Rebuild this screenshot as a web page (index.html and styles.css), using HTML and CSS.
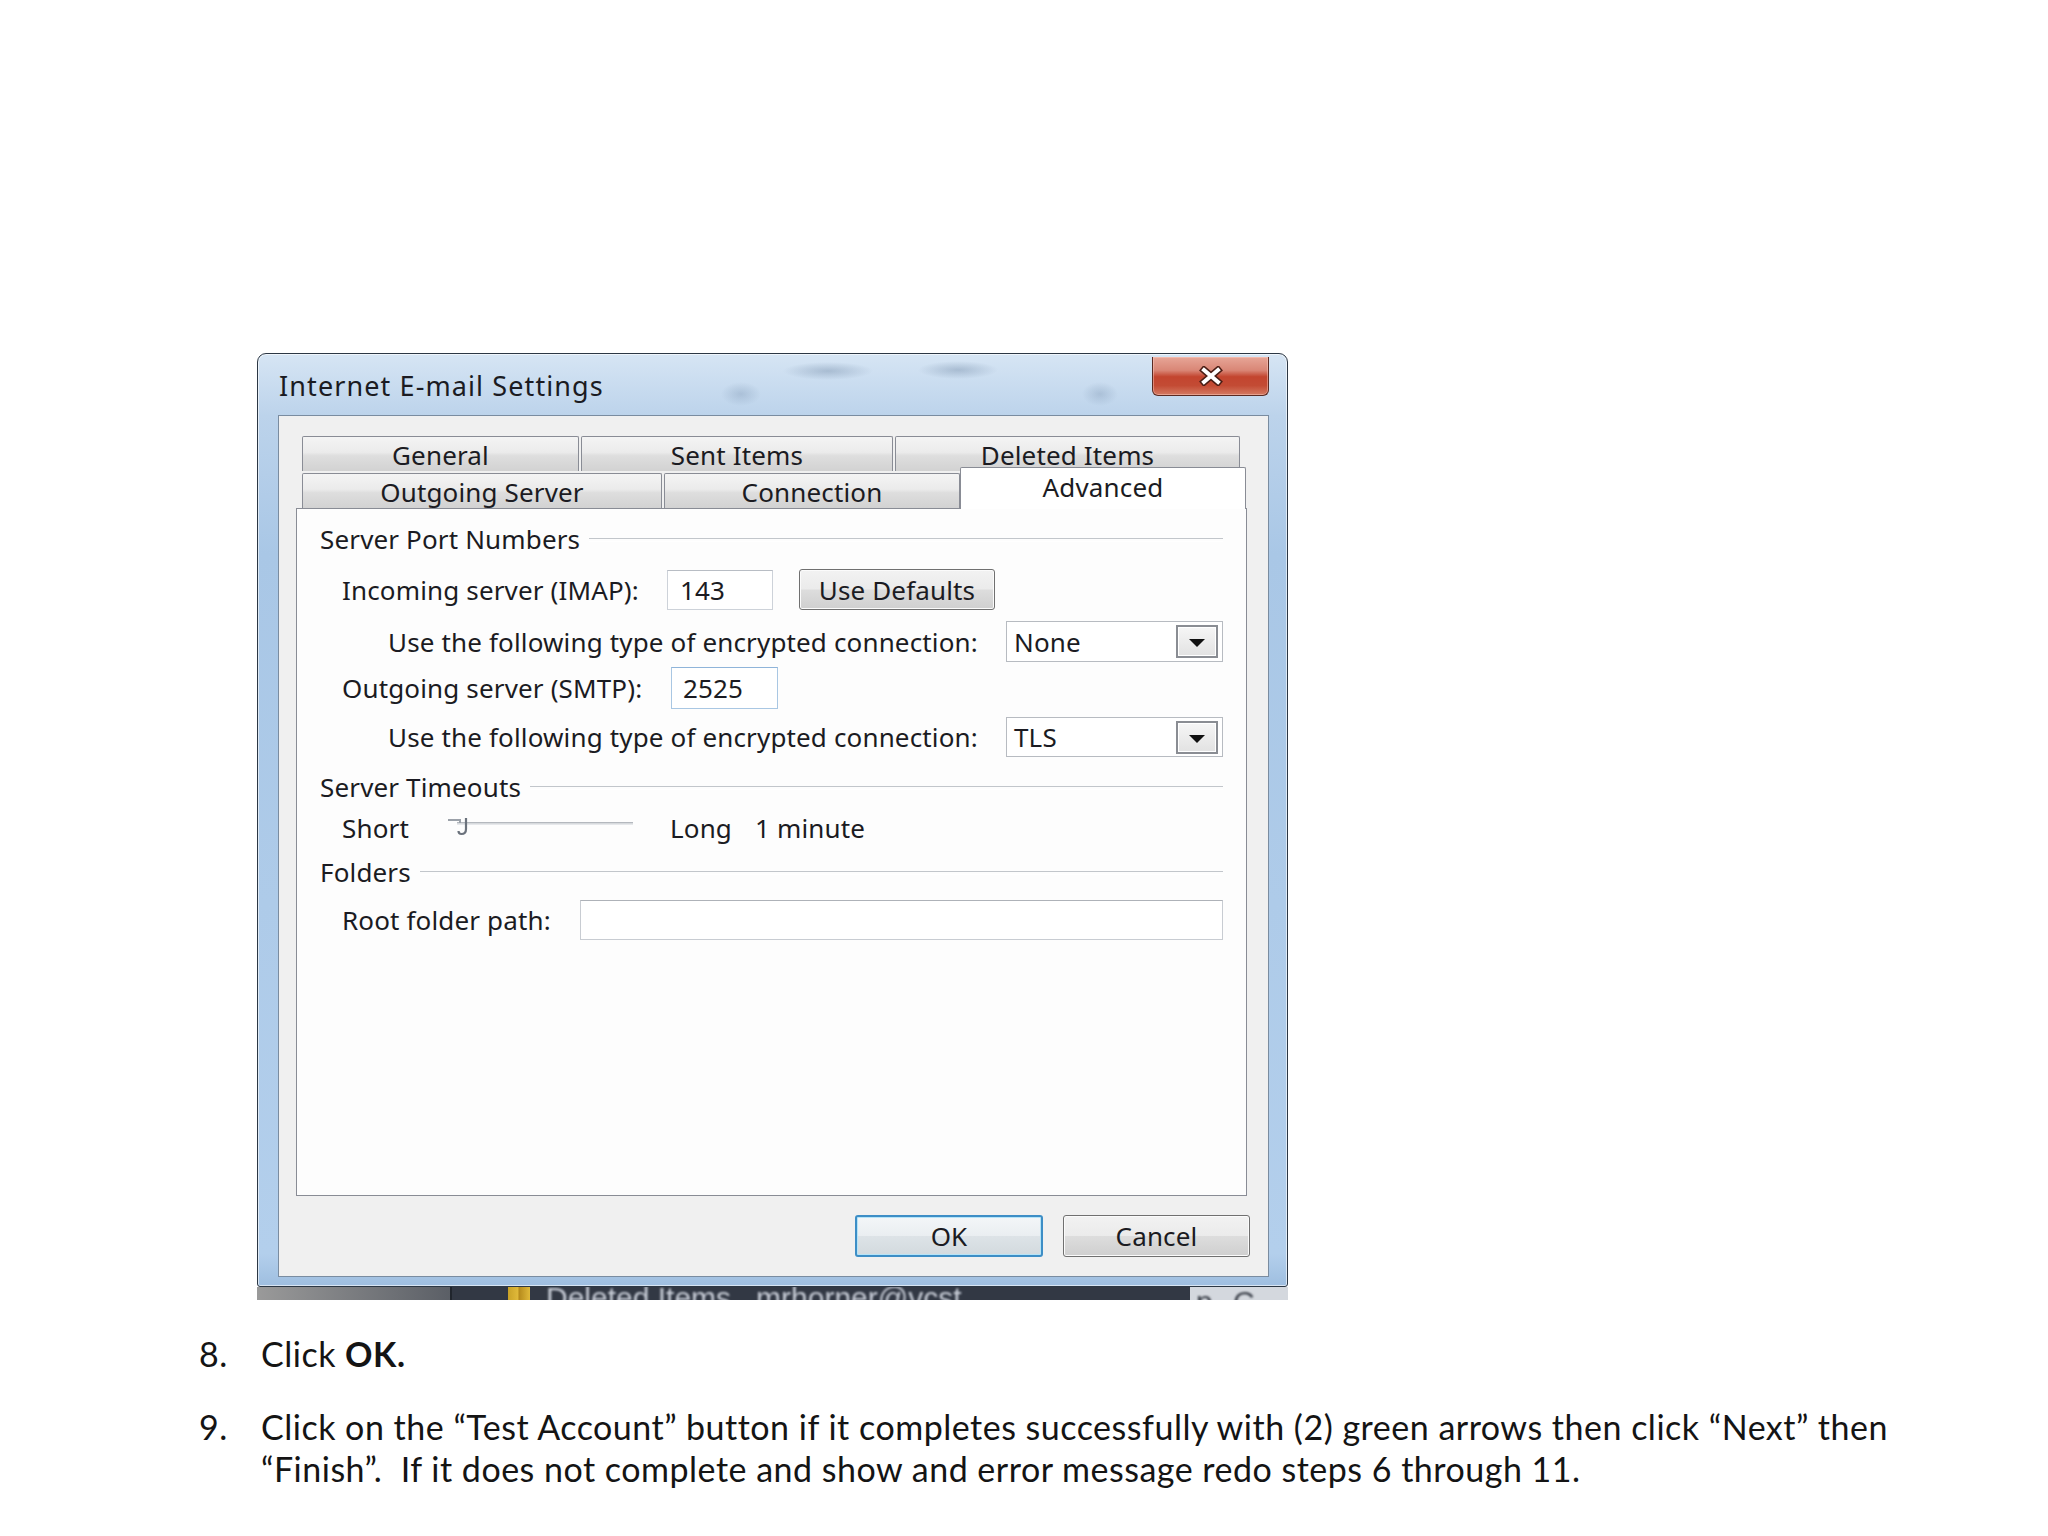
FILE: index.html
```html
<!DOCTYPE html>
<html lang="en">
<head>
    <meta charset="UTF-8">
    <title>Internet E-mail Settings</title>
    <link rel="stylesheet" href="styles.css">
</head>
<body>
<div class="page">
    <div class="window">
        <div class="frame">
            <div class="titlebar">
                <span class="title">Internet E-mail Settings</span>
                <button class="close-btn" aria-label="Close">
                    <svg width="24" height="20" viewBox="0 0 24 20">
                        <path d="M5 4 L19 16 M19 4 L5 16" stroke="#4a1d14" stroke-width="7" stroke-linecap="square" fill="none"/>
                        <path d="M5 4 L19 16 M19 4 L5 16" stroke="#ffffff" stroke-width="4" stroke-linecap="square" fill="none"/>
                    </svg>
                </button>
            </div>

            <div class="client">
                <div class="tab-row">
                    <div class="tab tab-general">General</div>
                    <div class="tab tab-sent">Sent Items</div>
                    <div class="tab tab-deleted">Deleted Items</div>
                </div>
                <div class="tab-row tab-row-front">
                    <div class="tab tab-outgoing">Outgoing Server</div>
                    <div class="tab tab-connection">Connection</div>
                    <div class="tab tab-advanced active">Advanced</div>
                </div>

                <div class="tab-page">
                    <div class="group-title row-title1"><span>Server Port Numbers</span></div>

                    <div class="field-row row-incoming">
                        <label class="lbl lbl-incoming">Incoming server (IMAP):</label>
                        <div class="textbox tb-imap">143</div>
                        <button class="win-btn defaults-btn">Use Defaults</button>
                    </div>

                    <div class="field-row sub-row row-enc1">
                        <label class="lbl lbl-enc">Use the following type of encrypted connection:</label>
                        <div class="combo">
                            <span class="combo-value">None</span>
                            <span class="combo-arrow"><i class="tri"></i></span>
                        </div>
                    </div>

                    <div class="field-row row-outgoing">
                        <label class="lbl lbl-outgoing">Outgoing server (SMTP):</label>
                        <div class="textbox tb-smtp">2525</div>
                    </div>

                    <div class="field-row sub-row row-enc2">
                        <label class="lbl lbl-enc">Use the following type of encrypted connection:</label>
                        <div class="combo">
                            <span class="combo-value">TLS</span>
                            <span class="combo-arrow"><i class="tri"></i></span>
                        </div>
                    </div>

                    <div class="group-title row-title2"><span>Server Timeouts</span></div>

                    <div class="field-row row-timeout">
                        <span class="lbl lbl-short">Short</span>
                        <div class="slider">
                            <div class="track"></div>
                            <svg class="thumb" width="30" height="22" viewBox="0 0 30 22">
                                <path d="M1 4 H13 V7" stroke="#9ba1a9" stroke-width="2" fill="none"/>
                                <path d="M19 2 V13 Q19 18 14.5 18 Q11.5 18 11.5 15" stroke="#6b727c" stroke-width="2.2" fill="none"/>
                            </svg>
                        </div>
                        <span class="lbl lbl-long">Long</span>
                        <span class="lbl lbl-minute">1 minute</span>
                    </div>

                    <div class="group-title row-title3"><span>Folders</span></div>

                    <div class="field-row row-root">
                        <label class="lbl lbl-root">Root folder path:</label>
                        <div class="textbox tb-root"></div>
                    </div>
                </div>

                <div class="dialog-buttons">
                    <button class="win-btn ok-btn">OK</button>
                    <button class="win-btn cancel-btn">Cancel</button>
                </div>
            </div>
        </div>
        <div class="backdrop-strip">
            <div class="strip-left"></div>
            <div class="strip-mid"><span class="strip-icon"></span><span class="strip-text">Deleted Items &nbsp; mrhorner@vcst</span></div>
            <div class="strip-right"><span class="strip-text dark">p C H</span></div>
        </div>
    </div>

    <ol class="steps">
        <li class="step step-8">
            <span class="num">8.</span>
            <span class="step-text">Click <b>OK.</b></span>
        </li>
        <li class="step step-9">
            <span class="num">9.</span>
            <span class="step-text">Click on the “Test Account” button if it completes successfully with (2) green arrows then click “Next” then<br>“Finish”.&nbsp; If it does not complete and show and error message redo steps 6 through 11.</span>
        </li>
    </ol>
</div>
</body>
</html>
```

FILE: styles.css
```css
:root {
    --ui-text: #1b1b22;
    --tab-border: #898c95;
    --dialog-bg: #f0f0f0;
}

* {
    box-sizing: border-box;
}

body {
    margin: 0;
    background: #ffffff;
}

.page {
    width: 2048px;
    height: 1536px;
    padding-top: 353px;
    overflow: hidden;
}

/* ---------- window frame ---------- */

.window {
    margin-left: 257px;
    width: 1031px;
}

.frame {
    height: 934px;
    border: 1px solid #2c3744;
    border-radius: 9px 9px 3px 3px;
    padding: 0 18px 9px 20px;
    background:
        radial-gradient(ellipse 45px 9px at 570px 17px, rgba(95, 120, 150, 0.35), transparent),
        radial-gradient(ellipse 40px 9px at 700px 16px, rgba(95, 120, 150, 0.35), transparent),
        radial-gradient(ellipse 20px 12px at 483px 40px, rgba(110, 135, 165, 0.3), transparent),
        radial-gradient(ellipse 18px 12px at 842px 40px, rgba(110, 135, 165, 0.3), transparent),
        linear-gradient(to bottom, #d6e5f4 0px, #bcd3eb 62px, #a9c7e6 200px, #b3cfec 900px, #9dbddf 934px);
    box-shadow: inset 0 0 0 1px rgba(255, 255, 255, 0.6);
}

.titlebar {
    height: 61px;
    display: flex;
    justify-content: space-between;
    align-items: flex-start;
}

.title {
    align-self: center;
    margin-left: 1px;
    margin-top: 2px;
    font-family: "Noto Sans", sans-serif;
    font-size: 27px;
    letter-spacing: 1.1px;
    color: #1b1b22;
}

.close-btn {
    margin-top: 3px;
    width: 117px;
    height: 39px;
    border: 1px solid #5a2a22;
    border-top: none;
    border-radius: 0 0 6px 6px;
    background: linear-gradient(to bottom, #e7a697 0%, #d98676 35%, #c3452f 52%, #c34b34 75%, #d47a62 100%);
    box-shadow: inset 0 0 0 1px rgba(255, 210, 200, 0.45);
    display: flex;
    align-items: center;
    justify-content: center;
    padding: 0;
}

.close-btn svg {
    display: block;
    margin-top: -1px;
}

.client {
    height: 862px;
    border: 1px solid #7a8ca0;
    background: var(--dialog-bg);
    padding: 20px 21px 0 17px;
    font-family: "Noto Sans", sans-serif;
    font-size: 26px;
    letter-spacing: 0.15px;
    color: var(--ui-text);
}

/* ---------- tabs ---------- */

.tab-row {
    display: flex;
    gap: 2px;
    height: 35px;
    margin-left: 6px;
    align-items: flex-end;
}

.tab-row-front {
    margin-top: 2px;
}

.tab {
    height: 35px;
    border: 1px solid var(--tab-border);
    border-bottom: none;
    border-radius: 2px 2px 0 0;
    background: linear-gradient(to bottom, #f4f4f4 0%, #ebebeb 45%, #dedede 55%, #d2d2d2 100%);
    display: flex;
    align-items: center;
    justify-content: center;
    line-height: 1;
    padding-top: 2px;
}

.tab-general { width: 277px; }
.tab-sent { width: 312px; }
.tab-deleted { width: 345px; }
.tab-outgoing { width: 360px; }
.tab-connection { width: 296px; }

.tab-advanced {
    width: 286px;
    height: 42px;
    margin-left: -2px;
    margin-bottom: -1px;
    position: relative;
    z-index: 1;
    background: #ffffff;
    align-items: flex-start;
    padding-top: 6px;
}

.tab-page {
    width: 951px;
    height: 688px;
    border: 1px solid var(--tab-border);
    background: #fdfdfd;
    padding: 0 23px 0 23px;
    display: flex;
    flex-direction: column;
}

.group-title {
    height: 28px;
    display: flex;
    align-items: center;
    white-space: nowrap;
}

.group-title::after {
    content: "";
    flex: 1;
    height: 2px;
    margin-left: 9px;
    margin-top: 2px;
    border-top: 1px solid #c2c6cb;
    border-bottom: 1px solid #ffffff;
}

.row-title1 { margin-top: 16px; }
.row-title2 { margin-top: 16px; }
.row-title3 { margin-top: 10px; }

.field-row {
    display: flex;
    align-items: center;
    padding-left: 22px;
    white-space: nowrap;
}

.sub-row {
    padding-left: 68px;
}

.row-incoming { margin-top: 16px; height: 41px; }
.row-enc1 { margin-top: 11px; height: 41px; }
.row-outgoing { margin-top: 5px; height: 42px; }
.row-enc2 { margin-top: 8px; height: 40px; }
.row-timeout { margin-top: 7px; height: 40px; }
.row-root { margin-top: 14px; height: 40px; }

.lbl {
    display: block;
    flex: none;
}

.lbl-incoming { width: 325px; }
.lbl-outgoing { width: 329px; }
.lbl-enc { width: 618px; }
.lbl-root { width: 238px; }
.lbl-short { width: 105px; }
.lbl-long { width: 85px; margin-left: 37px; }

/* ---------- inputs ---------- */

.textbox {
    height: 40px;
    border: 1px solid #cdd2d9;
    border-top-color: #b8bdc4;
    background: #ffffff;
    padding-left: 12px;
    display: flex;
    align-items: center;
}

.tb-imap { width: 106px; }

.tb-smtp {
    width: 107px;
    height: 42px;
    border-color: #a9c7e3;
    border-top-color: #8fb4d9;
    padding-left: 11px;
}

.tb-root {
    width: 646px;
    border-color: #c8ccd2;
    border-top-color: #aeb2b8;
}

.combo {
    width: 221px;
    height: 41px;
    border: 1px solid #b7bbc1;
    background: #ffffff;
    display: flex;
    align-items: center;
    justify-content: space-between;
    padding: 0 4px 0 7px;
}

.row-enc2 .combo {
    height: 40px;
}

.combo-arrow {
    width: 42px;
    height: 33px;
    border: 2px solid #8a8d93;
    background: linear-gradient(to bottom, #f6f6f6, #e2e2e2);
    box-shadow: inset 0 0 0 1px #ffffff;
    display: flex;
    align-items: center;
    justify-content: center;
}

.tri {
    width: 0;
    height: 0;
    border-left: 8px solid transparent;
    border-right: 8px solid transparent;
    border-top: 8px solid #111111;
    margin-top: 3px;
}

/* ---------- slider ---------- */

.slider {
    width: 186px;
    height: 22px;
    position: relative;
    margin-top: -2px;
}

.track {
    margin-top: 6px;
    margin-left: 10px;
    height: 3px;
    border-top: 1px solid #b4b8be;
    border-bottom: 1px solid #e6e8eb;
    background: #d7dadd;
}

.thumb {
    position: absolute;
    left: 0;
    top: 0;
}

/* ---------- buttons ---------- */

.win-btn {
    font-family: "Noto Sans", sans-serif;
    font-size: 26px;
    letter-spacing: 0.15px;
    color: var(--ui-text);
    border: 1px solid #707070;
    border-radius: 3px;
    background: linear-gradient(to bottom, #f2f2f2 0%, #ebebeb 49%, #dddddd 51%, #cfcfcf 100%);
    box-shadow: inset 0 0 0 1px #fbfbfb;
    padding: 0;
    line-height: 1;
}

.defaults-btn {
    width: 196px;
    height: 41px;
    margin-left: 26px;
}

.dialog-buttons {
    margin-top: 19px;
    margin-right: -3px;
    display: flex;
    justify-content: flex-end;
    gap: 20px;
}

.ok-btn,
.cancel-btn {
    height: 42px;
}

.ok-btn {
    width: 188px;
    border: 2px solid #3d8ec6;
    box-shadow: inset 0 0 0 1px #b5e4f8;
    background: linear-gradient(to bottom, #f3f6f8 0%, #eaeef1 49%, #dde3e7 51%, #d3dade 100%);
}

.cancel-btn {
    width: 187px;
}

/* ---------- background behind the window ---------- */

.backdrop-strip {
    height: 13px;
    display: flex;
    overflow: hidden;
}

.strip-left {
    width: 193px;
    background: linear-gradient(to right, #9a9a9a, #5b5f66);
}

.strip-mid {
    width: 740px;
    background: #323844;
    display: flex;
    align-items: flex-start;
    border-left: 2px solid #20252d;
}

.strip-icon {
    width: 22px;
    height: 13px;
    margin-left: 56px;
    background: linear-gradient(to right, #c9a227, #e0b93a 45%, #b58a1c 50%, #e0b93a);
}

.strip-text {
    margin-left: 16px;
    margin-top: -4px;
    font-family: "Liberation Sans", sans-serif;
    font-size: 30px;
    line-height: 30px;
    color: #c9ced8;
    filter: blur(0.8px);
}

.strip-right {
    flex: 1;
    background: #d4d8de;
}

.strip-text.dark {
    color: #3c414a;
    margin-left: 6px;
    letter-spacing: 6px;
}

/* ---------- instructions below ---------- */

.steps {
    list-style: none;
    margin: 33px 0 0 199px;
    padding: 0;
    font-family: "Lato", sans-serif;
    font-size: 34px;
    letter-spacing: 0.5px;
    line-height: 42px;
    color: #141414;
}

.step {
    display: flex;
}

.step-9 {
    margin-top: 31px;
}

.num {
    width: 62px;
    flex: none;
}

.step-text {
    white-space: nowrap;
}

.step-text b {
    font-weight: 700;
}
```
